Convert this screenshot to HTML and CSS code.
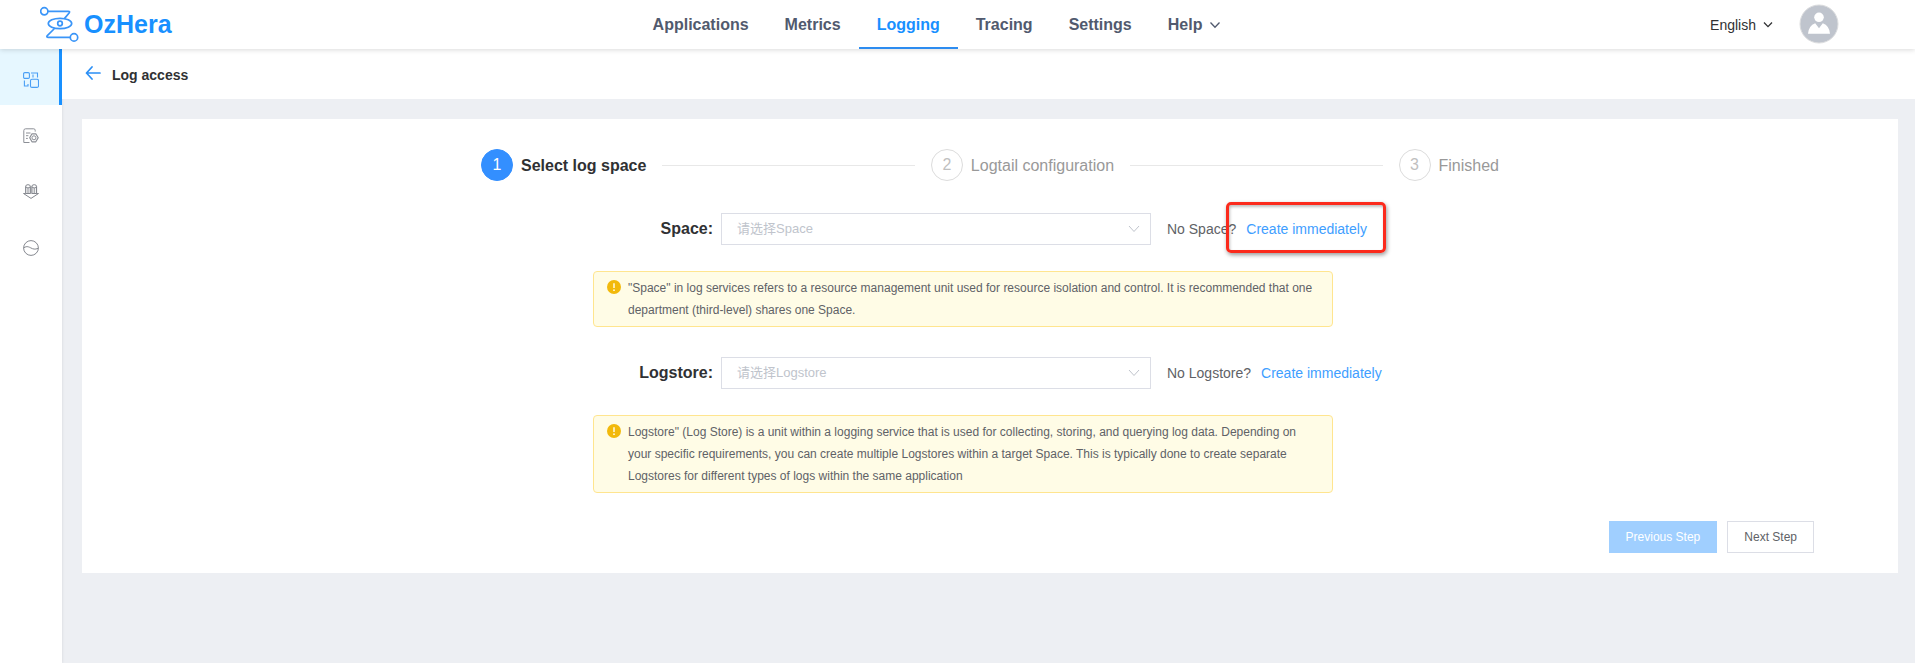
FILE: index.html
```html
<!DOCTYPE html>
<html lang="en">
<head>
<meta charset="utf-8">
<meta name="viewport" content="width=device-width, initial-scale=1">
<title>OzHera - Log access</title>
<link rel="stylesheet" href="styles.css">
</head>
<body>
<header class="topbar">
  <a class="brand" href="#">
    <svg class="brand-mark" viewBox="0 0 40 38" width="40" height="38" aria-hidden="true">
      <g fill="none" stroke="#3a95f8" stroke-width="1.7" stroke-linecap="round" stroke-linejoin="round">
        <circle cx="4.300" cy="5.300" r="3.600"/>
        <path d="M8.300 5.300H28.200q2.200 0 .9 1.700L24.600 12.400"/>
        <ellipse cx="20" cy="17.500" rx="11.700" ry="5.200"/>
        <circle cx="20" cy="17.500" r="2.300"/>
        <path d="M14 23L7.300 29.600Q6 31.400 8.300 31.400H29.700"/>
        <circle cx="34" cy="31.400" r="3.700"/>
      </g>
    </svg>
    <span>OzHera</span>
  </a>
  <nav class="mainnav" aria-label="Main">
    <a href="#">Applications</a>
    <a href="#">Metrics</a>
    <a class="current" href="#" aria-current="page">Logging</a>
    <a href="#">Tracing</a>
    <a href="#">Settings</a>
    <a href="#">Help
      <svg viewBox="0 0 10 8" width="10" height="8" aria-hidden="true"><path d="M.5 1.500L5 6.300L9.500 1.500" fill="none" stroke="currentColor" stroke-width="1.300"/></svg>
    </a>
  </nav>
  <div class="account">
    <button class="language" type="button">English
      <svg viewBox="0 0 10 8" width="10" height="8" aria-hidden="true"><path d="M1 1.500L5 5.600L9 1.500" fill="none" stroke="currentColor" stroke-width="1.300"/></svg>
    </button>
    <button class="avatar" type="button" aria-label="User account">
      <svg viewBox="0 0 40 40" width="40" height="40" aria-hidden="true">
        <circle cx="20" cy="20" r="19" fill="#bfc4cd" stroke="#dcdddf"/>
        <circle cx="20" cy="13.300" r="4.800" fill="#fff"/>
        <path d="M9 29.700q.6-8 7.200-10.500L20 24.300l3.800-5.100Q30.400 21.700 31 29.700z" fill="#fff"/>
      </svg>
    </button>
  </div>
</header>
<div class="shell">
  <nav class="sidebar" aria-label="Logging">
    <a class="active" href="#" aria-label="Log access">
      <svg viewBox="0 0 16 16" width="16" height="16" aria-hidden="true" fill="none" stroke="#4a9ff5" stroke-width="1.100">
        <rect x=".6" y=".6" width="5.800" height="5.800" rx="1.200"/>
        <path d="M8 1H14.500V5.400M10 2.600V5.400M1.400 8.500V14H5M5 12V14.500"/>
        <rect x="7.500" y="7.200" width="8" height="8.200" rx="1.500"/>
      </svg>
    </a>
    <a href="#" aria-label="Log configuration">
      <svg viewBox="0 0 16 16" width="16" height="16" aria-hidden="true" fill="none" stroke="#8c8f96" stroke-width="1">
        <path d="M12.200 3.600V2.300Q12.200 .8 10.700 .8H2.600Q.8 .8 .8 2.600V14.500H6.500"/>
        <path d="M3 5H7.500M3 7.700H5.400M3 10.400H4.800"/>
        <path d="M9 5.800H12.800L15.200 9.800L12.800 13.800H9L6.700 9.800z" stroke-width="1.200" stroke-linejoin="round"/>
        <circle cx="10.950" cy="9.800" r="2"/>
      </svg>
    </a>
    <a href="#" aria-label="Log collection">
      <svg viewBox="0 0 16 16" width="16" height="16" aria-hidden="true" fill="none" stroke="#85888f" stroke-width="1">
        <path d="M2.700 9.800V2.600M7.300 9.800V2.600M8.900 9.800V2.600M13.500 9.800V2.600" stroke-width="1.200"/>
        <ellipse cx="5" cy="2.300" rx="2.300" ry="1.600"/>
        <ellipse cx="11.200" cy="2.300" rx="2.300" ry="1.600"/>
        <path d="M5 4V9.500M11.200 4V9.500M2.700 9.500H7.300M8.900 9.500H13.500"/>
        <path d="M2.500 9.500H.5L8 14.400L15.500 9.500H13.600" stroke-linejoin="round"/>
      </svg>
    </a>
    <a href="#" aria-label="Trends">
      <svg viewBox="0 0 16 16" width="16" height="16" aria-hidden="true" fill="none" stroke="#85888f" stroke-width="1">
        <circle cx="8" cy="8" r="7.400"/>
        <path d="M1 7.700C4 5.700 6 7 8 8S12 9.800 15 8.300"/>
      </svg>
    </a>
  </nav>
  <main class="page">
    <div class="page-head">
      <a class="back" href="#" aria-label="Back">
        <svg viewBox="0 0 16 14" width="16" height="14" aria-hidden="true"><path d="M7 1L1.500 7L7 13M1.500 7H15" fill="none" stroke="#2b8ff5" stroke-width="1.700" stroke-linecap="round" stroke-linejoin="round"/></svg>
      </a>
      <h1>Log access</h1>
    </div>
    <section class="card">
      <ol class="steps">
        <li class="step now" aria-current="step"><span class="num">1</span><span class="name">Select log space</span></li>
        <li class="rule" aria-hidden="true"></li>
        <li class="step"><span class="num">2</span><span class="name">Logtail configuration</span></li>
        <li class="rule" aria-hidden="true"></li>
        <li class="step"><span class="num">3</span><span class="name">Finished</span></li>
      </ol>
      <form class="form">
        <div class="field">
          <label for="space">Space:</label>
          <div class="picker">
            <select id="space"><option>请选择Space</option></select>
            <svg viewBox="0 0 12 8" width="12" height="8" aria-hidden="true"><path d="M1 1L6 6.500L11 1" fill="none" stroke="#c0c4cc"/></svg>
          </div>
          <p class="hint">No Space? <a class="marked" href="#">Create immediately</a></p>
        </div>
        <div class="notice">
          <svg viewBox="0 0 14 14" width="14" height="14" aria-hidden="true"><circle cx="7" cy="7" r="7" fill="#f2b90c"/><path d="M7 3.200V8" stroke="#fffbe6" stroke-width="1.500"/><circle cx="7" cy="10.200" r=".9" fill="#fffbe6"/></svg>
          <p>"Space" in log services refers to a resource management unit used for resource isolation and control. It is recommended that one department (third-level) shares one Space.</p>
        </div>
        <div class="field">
          <label for="logstore">Logstore:</label>
          <div class="picker">
            <select id="logstore"><option>请选择Logstore</option></select>
            <svg viewBox="0 0 12 8" width="12" height="8" aria-hidden="true"><path d="M1 1L6 6.500L11 1" fill="none" stroke="#c0c4cc"/></svg>
          </div>
          <p class="hint">No Logstore? <a href="#">Create immediately</a></p>
        </div>
        <div class="notice">
          <svg viewBox="0 0 14 14" width="14" height="14" aria-hidden="true"><circle cx="7" cy="7" r="7" fill="#f2b90c"/><path d="M7 3.200V8" stroke="#fffbe6" stroke-width="1.500"/><circle cx="7" cy="10.200" r=".9" fill="#fffbe6"/></svg>
          <p>Logstore" (Log Store) is a unit within a logging service that is used for collecting, storing, and querying log data. Depending on your specific requirements, you can create multiple Logstores within a target Space. This is typically done to create separate Logstores for different types of logs within the same application</p>
        </div>
      </form>
      <div class="actions">
        <button class="btn primary" type="button" disabled>Previous Step</button>
        <button class="btn" type="button">Next Step</button>
      </div>
    </section>
  </main>
</div>
</body>
</html>
```

FILE: styles.css
```css
* {
  box-sizing: border-box;
}

body {
  margin: 0;
  min-height: 100vh;
  display: flex;
  flex-direction: column;
  background: #edeff3;
  color: #303133;
  font-family: "Liberation Sans", "Noto Sans CJK SC", sans-serif;
  font-size: 14px;
}

a {
  color: inherit;
  text-decoration: none;
}

button,
select {
  font-family: inherit;
}

svg {
  flex: none;
  display: block;
}

h1,
p,
ol {
  margin: 0;
  padding: 0;
}

.topbar {
  position: relative;
  z-index: 1;
  display: grid;
  grid-template-columns: 1fr auto 1fr;
  height: 49px;
  padding: 0 76px 0 40px;
  background: #fff;
  box-shadow: 0 1px 5px rgba(0, 0, 0, 0.15);
}

.brand {
  display: flex;
  align-items: center;
  gap: 4px;
  color: #1890ff;
  font-size: 25px;
  font-weight: bold;
}

.mainnav {
  display: flex;
  padding-right: 6px;
  color: #515a6e;
  font-size: 16px;
  font-weight: bold;
}

.mainnav a {
  display: flex;
  align-items: center;
  gap: 8px;
  padding: 2px 18px 0;
  border-bottom: 2px solid transparent;
}

.mainnav .current {
  color: #1890ff;
  border-bottom-color: #2d8cf0;
}

.account {
  display: flex;
  align-items: center;
  justify-content: flex-end;
  gap: 26px;
}

.account button {
  padding: 0;
  border: 0;
  background: none;
}

.account .avatar {
  padding-bottom: 2px;
}

.language {
  display: flex;
  align-items: center;
  gap: 7px;
  color: #303133;
  font-size: 14px;
}

.shell {
  flex: 1;
  display: flex;
}

.sidebar {
  flex: none;
  width: 62px;
  background: #fff;
  box-shadow: 1px 0 2px rgba(0, 0, 0, 0.06);
}

.sidebar a {
  display: flex;
  align-items: center;
  justify-content: center;
  height: 56px;
  padding-top: 6px;
}

.sidebar .active {
  background: linear-gradient(to left, #1890ff 3px, #e6f7ff 3px);
}

.page {
  flex: 1;
  min-width: 0;
}

.page-head {
  display: flex;
  align-items: center;
  gap: 11px;
  height: 50px;
  padding-left: 23px;
  background: #fff;
}

.back {
  padding-bottom: 2px;
}

.page-head h1 {
  padding-top: 2px;
  font-size: 14px;
}

.card {
  margin: 20px 17px 0 20px;
  padding: 30px 84px 20px;
  background: #fff;
}

.steps {
  display: flex;
  align-items: center;
  gap: 16px;
  max-width: 1018px;
  margin: 0 auto 32px;
  list-style: none;
  font-size: 16px;
}

.step {
  display: flex;
  align-items: center;
  gap: 8px;
  color: #999;
}

.name {
  padding-top: 1px;
}

.num {
  display: flex;
  align-items: center;
  justify-content: center;
  width: 32px;
  height: 32px;
  border: 1px solid #dcdcdc;
  border-radius: 50%;
  color: #bfbfbf;
}

.now {
  color: #303133;
  font-weight: bold;
}

.now .num {
  border-color: #338fff;
  background: #338fff;
  color: #fff;
  font-weight: normal;
}

.rule {
  flex: 1;
  height: 1px;
  background: #e8e8e8;
}

.form {
  max-width: 794px;
  margin: 0 auto;
}

.field {
  display: flex;
  align-items: center;
}

.field label {
  width: 120px;
  margin-right: 8px;
  text-align: right;
  font-size: 16px;
  font-weight: bold;
}

.picker {
  display: grid;
  flex: 0 1 430px;
  align-items: center;
}

.picker > * {
  grid-area: 1 / 1;
}

.picker select {
  height: 32px;
  padding: 0 32px 2px 15px;
  appearance: none;
  border: 1px solid #dcdee6;
  border-radius: 0;
  background: #fff;
  color: #c0c4cc;
  font-size: 13px;
}

.picker svg {
  justify-self: end;
  margin-right: 11px;
  pointer-events: none;
}

.hint {
  display: flex;
  gap: 10px;
  margin-left: 16px;
  color: #606266;
  white-space: nowrap;
}

.hint a {
  color: #409eff;
}

.marked {
  position: relative;
}

.marked::after {
  content: "";
  position: absolute;
  inset: -19px -19px -16px -20px;
  border: 3px solid #fb2a1c;
  border-radius: 5px;
  box-shadow: 1px 2px 4px rgba(0, 0, 0, 0.4), inset 1px 2px 3px rgba(0, 0, 0, 0.25);
}

.notice {
  display: flex;
  gap: 7px;
  max-width: 740px;
  margin: 26px 0 30px;
  padding: 5px 12px 5px 13px;
  border: 1px solid #ffe58f;
  border-radius: 4px;
  background: #fffce6;
  color: #606266;
  font-size: 12px;
  line-height: 22px;
}

.notice svg {
  margin-top: 3px;
}

.notice:last-child {
  margin-bottom: 28px;
}

.actions {
  display: flex;
  justify-content: flex-end;
  gap: 10px;
}

.btn {
  height: 32px;
  padding: 0 16px;
  border: 1px solid #dcdee6;
  background: #fff;
  color: #606266;
  font-size: 12px;
}

.primary {
  border-color: #a0cfff;
  background: #a0cfff;
  color: #fff;
}
```
